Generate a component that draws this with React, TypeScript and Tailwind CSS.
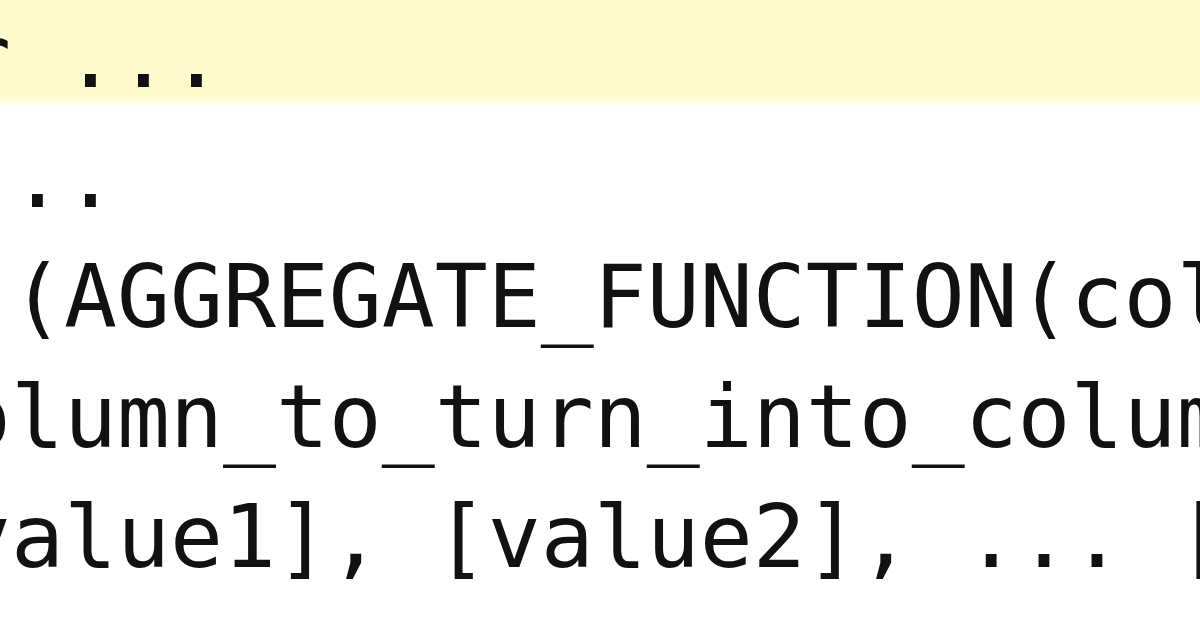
import React from 'react';

const lines = [
  ' ..',
  ' (AGGREGATE_FUNCTION(column_to_aggregate)',
  'olumn_to_turn_into_column] IN',
  'value1], [value2], ... [valueN])',
];

const App: React.FC = () => {
  return (
    <div className="w-[1200px] h-[626px] overflow-hidden bg-white text-[#111]">
      <div className="ml-[-42px] font-['DejaVu_Sans_Mono',monospace] text-[88px] leading-[120px] whitespace-pre">
        <div className="-mt-[3px] h-[110px] mb-[10px] bg-[linear-gradient(to_bottom,#fffbcf_92%,#ffffff)]">
          {'r ...'}
        </div>
        {lines.map((line, index) => (
          <div key={index}>{line}</div>
        ))}
      </div>
    </div>
  );
};

export default App;
